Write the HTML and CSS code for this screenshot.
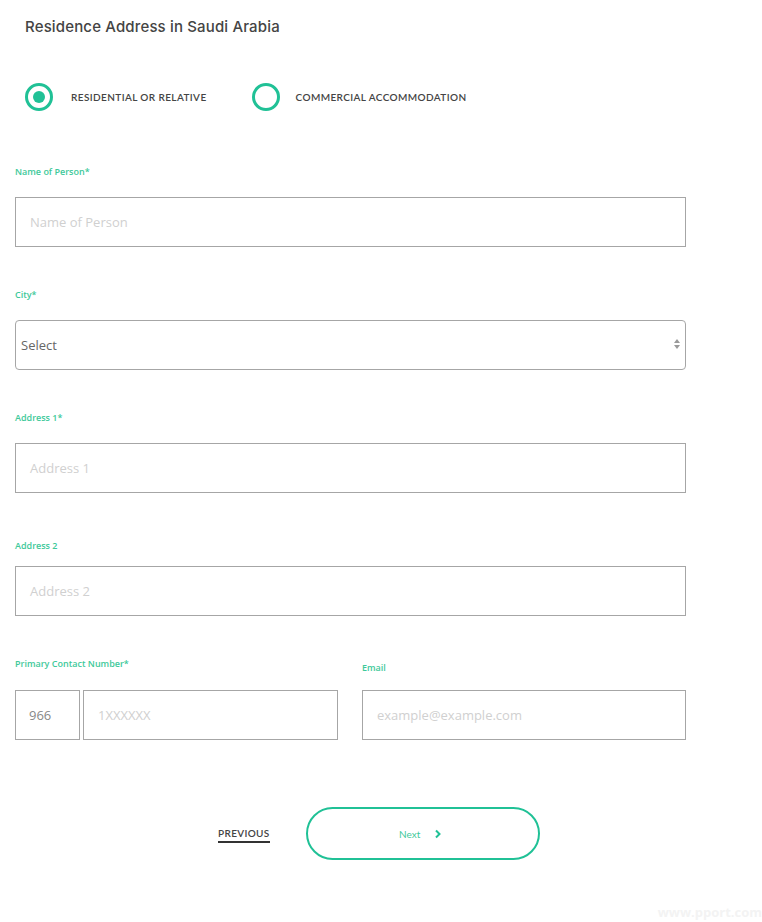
FILE: index.html
```html
<!DOCTYPE html>
<html>
<head>
<meta charset="utf-8">
<link rel="stylesheet" href="styles.css">
</head>
<body>
<div class="page">
  <h1 class="title">Residence Address in Saudi Arabia</h1>

  <div class="radios">
    <label class="radio">
      <span class="circle checked"><span class="dot"></span></span>
      <span class="radio-text">RESIDENTIAL OR RELATIVE</span>
    </label>
    <label class="radio">
      <span class="circle"></span>
      <span class="radio-text">COMMERCIAL ACCOMMODATION</span>
    </label>
  </div>

  <div class="field f-name">
    <div class="label">Name of Person*</div>
    <div class="input"><span class="ph">Name of Person</span></div>
  </div>

  <div class="field f-city">
    <div class="label">City*</div>
    <div class="input select">
      <span class="sel-text">Select</span>
      <svg class="arrows" width="8" height="12" viewBox="0 0 8 12"><path d="M4 1 L7 5 L1 5 Z" fill="#9a9a9a"/><path d="M4 11 L7 7 L1 7 Z" fill="#9a9a9a"/></svg>
    </div>
  </div>

  <div class="field f-addr1">
    <div class="label">Address 1*</div>
    <div class="input"><span class="ph">Address 1</span></div>
  </div>

  <div class="field f-addr2">
    <div class="label">Address 2</div>
    <div class="input"><span class="ph">Address 2</span></div>
  </div>

  <div class="contact-row">
    <div class="field">
      <div class="label">Primary Contact Number*</div>
      <div class="phone">
        <div class="input code"><span class="val">966</span></div>
        <div class="input num"><span class="ph">1XXXXXX</span></div>
      </div>
    </div>
    <div class="field email">
      <div class="label">Email</div>
      <div class="input"><span class="ph">example@example.com</span></div>
    </div>
  </div>

  <div class="actions">
    <a class="prev">PREVIOUS</a>
    <button class="next"><span>Next</span>
      <svg width="8" height="10" viewBox="0 0 8 10"><path d="M2 1.5 L5.5 5 L2 8.5" fill="none" stroke="#20c196" stroke-width="2"/></svg>
    </button>
  </div>

  <div class="watermark">www.pport.com</div>
</div>
</body>
</html>
```

FILE: styles.css
```css
* { box-sizing: border-box; }
html, body { margin: 0; padding: 0; background: #fff; }
body { width: 762px; height: 922px; overflow: hidden; font-family: "Open Sans", sans-serif; }
.page { position: relative; height: 922px; padding: 17px 76px 0 15px; }

.title {
  margin: 0 0 0 10px;
  font-family: Inter, Lato, sans-serif;
  font-weight: 500;
  font-size: 15px;
  line-height: 20px;
  letter-spacing: 0.15px;
  color: #444;
}

.radios { display: flex; margin-top: 46px; padding-left: 10px; height: 28px; }
.radio { display: flex; align-items: center; }
.radio + .radio { margin-left: 45px; }
.circle {
  width: 28px; height: 28px; border-radius: 50%;
  border: 3px solid #20c196;
  display: flex; align-items: center; justify-content: center;
}
.dot { width: 12px; height: 12px; border-radius: 50%; background: #20c196; }
.radio-text {
  margin-left: 17px;
  font-family: Lato, "Open Sans", sans-serif;
  font-weight: 600;
  font-size: 10px;
  letter-spacing: 0.4px;
  color: #444;
}
.radios .radio:first-child .radio-text { margin-left: 18px; }
.radios .radio:last-child .radio-text { margin-left: 16px; }

.label {
  font-family: "Open Sans", sans-serif;
  font-weight: 600;
  font-size: 9px;
  line-height: 12px;
  color: #3ec99a;
  height: 12px;
}
.input {
  height: 50px;
  border: 1px solid #a6a6a6;
  display: flex; align-items: center;
  padding-left: 14px;
  font-size: 13px;
}
.ph { color: #d0d0d0; }
.val { color: #888; }

.f-name { margin-top: 55px; }
.f-name .input { margin-top: 19px; }
.f-city { margin-top: 42px; }
.f-city .input { margin-top: 19px; }
.f-addr1 { margin-top: 42px; }
.f-addr1 .input { margin-top: 19px; }
.f-addr2 { margin-top: 47px; }
.f-addr2 .input { margin-top: 14px; }

.select { border-radius: 4px; padding-left: 5px; padding-right: 4px; justify-content: space-between; }
.sel-text { color: #666; font-size: 13px; }
.arrows { display: block; margin-top: -2px; }

.contact-row { display: grid; grid-template-columns: 323px 324px; column-gap: 24px; margin-top: 42px; }
.contact-row .input { margin-top: 20px; }
.email .label { margin-top: 4px; }
.email .input { margin-top: 16px; }
.phone { display: flex; gap: 3px; }
.code { width: 65px; padding-left: 13px; }
.num { flex: 1; }

.actions { display: flex; align-items: center; margin-top: 67px; padding-left: 203px; }
.prev {
  font-family: Lato, "Open Sans", sans-serif;
  font-weight: 600;
  font-size: 10px;
  letter-spacing: 0.35px;
  color: #444;
  padding-bottom: 2px;
  border-bottom: 2px solid #333;
  margin-top: 3px;
}
.next {
  margin-left: 36px;
  width: 234px; height: 53px;
  border: 2px solid #20c196;
  border-radius: 27px;
  background: #fff;
  display: flex; align-items: center; justify-content: center;
  gap: 14px;
  padding: 0 4px 0 0;
  font-family: Lato, "Open Sans", sans-serif;
  font-size: 10px;
  color: #3ec99a;
}
.next span { margin-top: 1px; }

.watermark {
  position: absolute; right: 0; bottom: 1px;
  font-family: "Open Sans", sans-serif; font-weight: 700; font-size: 13px;
  color: #f3f3f3;
}
```
